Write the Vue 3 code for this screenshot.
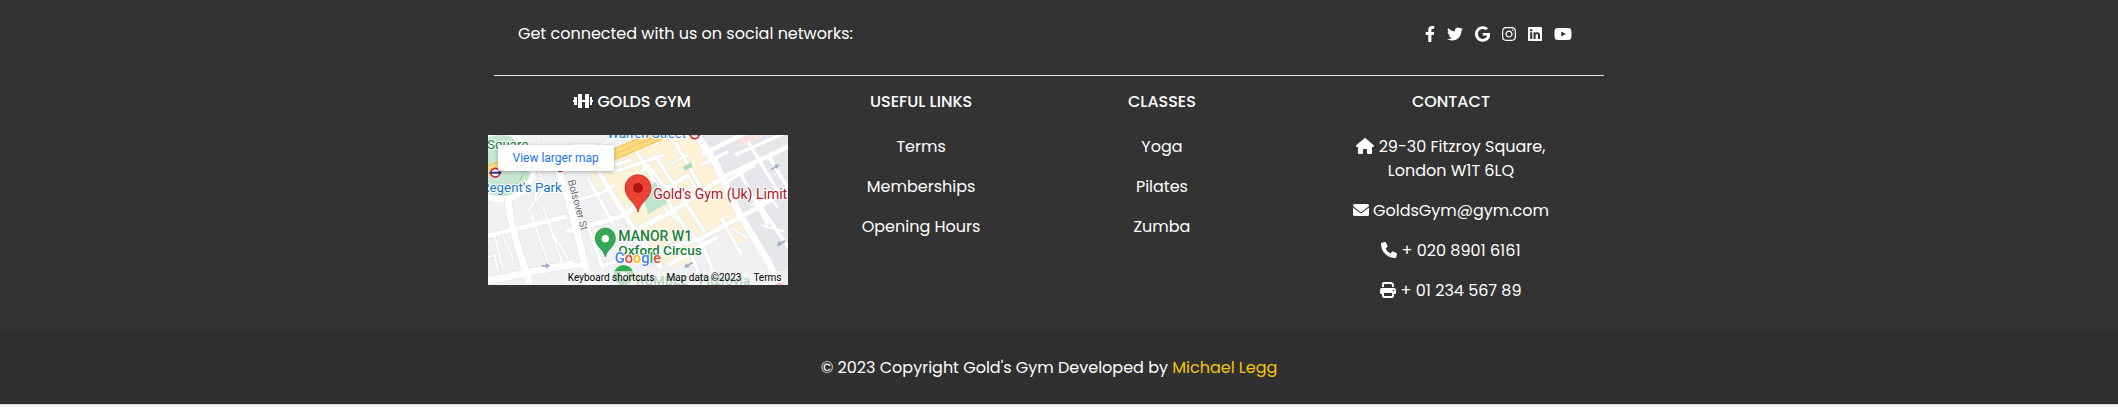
<script setup>
const socials = [
  { name: 'Facebook', w: 320, d: 'M279.14 288l14.22-92.66h-88.91v-60.13c0-25.35 12.42-50.06 52.24-50.06h40.42V6.26S260.43 0 225.36 0c-73.22 0-121.08 44.38-121.08 124.72v70.62H22.89V288h81.39v224h100.17V288z' },
  { name: 'Twitter', w: 512, d: 'M459.37 151.716c.325 4.548.325 9.097.325 13.645 0 138.72-105.583 298.558-298.558 298.558-59.452 0-114.68-17.219-161.137-47.106 8.447.974 16.568 1.299 25.34 1.299 49.055 0 94.213-16.568 130.274-44.832-46.132-.975-84.792-31.188-98.112-72.772 6.498.974 12.995 1.624 19.818 1.624 9.421 0 18.843-1.3 27.614-3.573-48.081-9.747-84.143-51.98-84.143-102.985v-1.299c13.969 7.797 30.214 12.67 47.431 13.319-28.264-18.843-46.781-51.005-46.781-87.391 0-19.492 5.197-37.36 14.294-52.954 51.655 63.675 129.3 105.258 216.365 109.807-1.624-7.797-2.599-15.918-2.599-24.04 0-57.828 46.782-104.934 104.934-104.934 30.213 0 57.502 12.67 76.67 33.137 23.715-4.548 46.456-13.32 66.599-25.34-7.798 24.366-24.366 44.833-46.132 57.827 21.117-2.273 41.584-8.122 60.426-16.243-14.292 20.791-32.161 39.308-52.628 54.253z' },
  { name: 'Google', w: 488, d: 'M488 261.8C488 403.3 391.1 504 248 504 110.8 504 0 393.2 0 256S110.8 8 248 8c66.8 0 123 24.5 166.3 64.9l-67.5 64.9C258.5 52.6 94.3 116.6 94.3 256c0 86.5 69.1 156.6 153.7 156.6 98.2 0 135-70.4 140.8-106.9H248v-85.3h236.1c2.3 12.7 3.9 24.9 3.9 41.4z' },
  { name: 'Instagram', w: 448, d: 'M224.1 141c-63.6 0-114.9 51.3-114.9 114.9s51.3 114.9 114.9 114.9S339 319.5 339 255.9 287.7 141 224.1 141zm0 189.6c-41.1 0-74.7-33.5-74.7-74.7s33.5-74.7 74.7-74.7 74.7 33.5 74.7 74.7-33.6 74.7-74.7 74.7zm146.4-194.3c0 14.9-12 26.8-26.8 26.8-14.9 0-26.8-12-26.8-26.8s12-26.8 26.8-26.8 26.8 12 26.8 26.8zm76.1 27.2c-1.7-35.9-9.9-67.7-36.2-93.9-26.2-26.2-58-34.4-93.9-36.2-37-2.1-147.9-2.1-184.9 0-35.8 1.7-67.6 9.9-93.9 36.1s-34.4 58-36.2 93.9c-2.1 37-2.1 147.9 0 184.9 1.7 35.9 9.9 67.7 36.2 93.9s58 34.4 93.9 36.2c37 2.1 147.9 2.1 184.9 0 35.9-1.7 67.7-9.9 93.9-36.2 26.2-26.2 34.4-58 36.2-93.9 2.1-37 2.1-147.8 0-184.8zM398.8 388c-7.8 19.6-22.9 34.7-42.6 42.6-29.5 11.7-99.5 9-132.1 9s-102.7 2.6-132.1-9c-19.6-7.8-34.7-22.9-42.6-42.6-11.7-29.5-9-99.5-9-132.1s-2.6-102.7 9-132.1c7.8-19.6 22.9-34.7 42.6-42.6 29.5-11.7 99.5-9 132.1-9s102.7-2.6 132.1 9c19.6 7.8 34.7 22.9 42.6 42.6 11.7 29.5 9 99.5 9 132.1s2.7 102.7-9 132.1z' },
  { name: 'LinkedIn', w: 448, d: 'M416 32H31.9C14.3 32 0 46.5 0 64.3v383.4C0 465.5 14.3 480 31.9 480H416c17.6 0 32-14.5 32-32.3V64.3c0-17.8-14.4-32.3-32-32.3zM135.4 416H69V202.2h66.5V416zm-33.2-243c-21.3 0-38.5-17.3-38.5-38.5S80.9 96 102.2 96c21.2 0 38.5 17.3 38.5 38.5 0 21.3-17.2 38.5-38.5 38.5zm282.1 243h-66.4V312c0-24.8-.5-56.7-34.5-56.7-34.6 0-39.9 27-39.9 54.9V416h-66.4V202.2h63.7v29.2h.9c8.9-16.8 30.6-34.5 62.9-34.5 67.2 0 79.7 44.3 79.7 101.9V416z' },
  { name: 'YouTube', w: 576, d: 'M549.655 124.083c-6.281-23.65-24.787-42.276-48.284-48.597C458.781 64 288 64 288 64S117.22 64 74.629 75.486c-23.497 6.322-42.003 24.947-48.284 48.597-11.412 42.867-11.412 132.305-11.412 132.305s0 89.438 11.412 132.305c6.281 23.65 24.787 41.5 48.284 47.821C117.22 448 288 448 288 448s170.78 0 213.371-11.486c23.497-6.321 42.003-24.171 48.284-47.821 11.412-42.867 11.412-132.305 11.412-132.305s0-89.438-11.412-132.305zm-317.51 213.508V175.185l142.739 81.205-142.739 81.201z' },
]

const linkGroups = [
  { title: 'USEFUL LINKS', items: ['Terms', 'Memberships', 'Opening Hours'] },
  { title: 'CLASSES', items: ['Yoga', 'Pilates', 'Zumba'] },
]

const contacts = [
  { w: 576, lines: ['29-30 Fitzroy Square,', 'London W1T 6LQ'], d: 'M575.8 255.5c0 18-15 32.1-32 32.1h-32l.7 160.2c0 2.7-.2 5.4-.5 8.1V472c0 22.1-17.9 40-40 40H392c-22.1 0-40-17.9-40-40V384c0-17.7-14.3-32-32-32H256c-17.7 0-32 14.3-32 32v88c0 22.1-17.9 40-40 40H104c-22.1 0-40-17.9-40-40V287.6H32c-18 0-32-14-32-32.1c0-9 3-17 10-24L266.4 8c7-7 15-8 22-8s15 2 21 7L564.8 231.5c8 7 12 15 11 24z' },
  { w: 512, lines: ['GoldsGym@gym.com'], d: 'M256 352c-16.53 0-33.06-5.422-47.16-16.41L0 173.2V400C0 426.5 21.49 448 48 448h416c26.51 0 48-21.49 48-48V173.2l-208.8 162.5C289.1 346.6 272.5 352 256 352zM16.29 145.3l212.2 165.1c16.19 12.6 38.87 12.6 55.06 0l212.2-165.1C505.1 137.3 512 125 512 112C512 85.49 490.5 64 464 64h-416C21.49 64 0 85.49 0 112C0 125 6.01 137.3 16.29 145.3z' },
  { w: 512, lines: ['+ 020 8901 6161'], d: 'M511.2 387l-23.25 100.8c-3.266 14.25-15.79 24.22-30.46 24.22C205.2 512 0 306.8 0 54.5c0-14.66 9.969-27.2 24.22-30.45l100.8-23.25C139.7-2.602 154.7 5.018 160.8 18.92l46.52 108.5c5.438 12.78 1.77 27.67-8.98 36.45L144.5 207.1c33.98 69.22 90.26 125.5 159.5 159.5l44.08-53.8c8.688-10.78 23.69-14.51 36.47-8.975l108.5 46.51C506.1 357.2 514.6 372.4 511.2 387z' },
  { w: 512, lines: ['+ 01 234 567 89'], d: 'M128 0C92.7 0 64 28.7 64 64v96h64V64H354.7L384 93.3V160h64V93.3c0-17-6.7-33.3-18.7-45.3L400 18.7C388 6.7 371.7 0 354.7 0H128zM384 352v96H128V352H384zm64 32h32c17.7 0 32-14.3 32-32V256c0-35.3-28.7-64-64-64H64c-35.3 0-64 28.7-64 64v96c0 17.7 14.3 32 32 32H64v64c0 35.3 28.7 64 64 64H384c35.3 0 64-28.7 64-64V384zM432 248a24 24 0 1 1 0 48 24 24 0 1 1 0-48z' },
]

/* Streets of the map, as polylines grouped by stroke width */
const roads = [
  { width: 22, d: 'M60 190 C66 280 100 360 128 460 M205 90 L240 190 L310 460 M620 -10 L680 80 L750 230 L840 380 L880 460 M-10 440 L120 412 L260 385' },
  { width: 15, d: 'M120 412 L290 388 M440 290 L560 225 L700 130 L910 30 M510 350 L640 310 L760 245 L910 160 M540 390 L690 305 M-10 305 L70 285 L235 245 M235 290 L400 245 L600 120 M320 90 L410 240 L520 400 M640 60 L780 -10' },
  { width: 11, d: 'M250 200 L340 175 L380 150 M300 130 L375 265 M250 290 L300 275 L345 400 M380 110 L530 60 M440 40 L500 140 L600 290 M500 60 L590 200 L650 290 M560 20 L640 160 M340 100 L430 75 M460 110 L480 90 L540 170 M640 90 L720 50 M700 150 L800 90 M780 20 L870 170 M740 60 L900 -10 M800 190 L910 350 M760 120 L840 270 M700 250 L760 360 M640 320 L680 420 M600 340 L640 430 M400 350 L440 440 M410 300 L520 240 M350 390 L480 350 M410 240 L440 210 M840 60 L900 160' },
  { width: 7, d: 'M130 240 L180 380 M165 215 L225 390 M190 290 L240 370 M20 305 L45 400 M-10 370 L20 360 L30 410 M45 305 L75 370 M120 225 L175 160 L205 140 M150 145 L140 200 M150 20 L200 90 M120 40 L170 150 M70 0 L180 110 M250 30 L330 30 M280 60 L380 10 M580 180 L620 155 L600 120 M535 300 L570 360 M600 280 L640 330 M380 180 L430 260 M790 210 L850 190 L870 220 M820 270 L890 290 M730 280 L780 310 M540 90 L600 60 M510 200 L570 260' },
]
</script>

<template>
  <footer class="footer">
    <div class="container">
      <section class="social">
        <span>Get connected with us on social networks:</span>
        <nav class="social-links" aria-label="Social networks">
          <a v-for="s in socials" :key="s.name" href="#" :aria-label="s.name">
            <svg class="icon" :viewBox="`0 0 ${s.w} 512`"><path :d="s.d" /></svg>
          </a>
        </nav>
      </section>
    </div>

    <div class="columns">
      <section class="column">
        <h6>
          <svg class="icon" viewBox="0 0 20 16">
            <path d="M0 7h1V4h3v8H1V9H0zM5 1h4v6h3V1h4v14h-4V9H9v6H5zM17 4h2v3h1v2h-1v3h-2z" />
          </svg>
          GOLDS GYM
        </h6>
        <div class="map">
          <svg class="map-canvas" viewBox="0 0 900 450" role="img" aria-label="Map of Gold's Gym">
            <rect width="900" height="450" fill="#eff1f3" />
            <path d="M620 0H900V450H880L680 110z" fill="#e5e7eb" />
            <path d="M300 110L430 50L520 0H620L690 110L800 310L740 330L690 270L560 400L520 385L470 300L400 240z" fill="#fef3d6" />
            <path d="M500 340L560 300L625 370L560 400z" fill="#fef3d6" />
            <path d="M735 0H830L770 35z" fill="#fbe3e1" />
            <circle cx="38" cy="95" r="106" fill="#fff" />
            <circle cx="38" cy="92" r="92" fill="#c6e7d0" />
            <circle cx="38" cy="92" r="72" fill="none" stroke="#87c994" stroke-width="3" stroke-dasharray="20 8" />
            <g v-for="r in roads" :key="r.width" fill="none" stroke-linejoin="round">
              <path :d="r.d" stroke="#dcdfe5" :stroke-width="r.width + 3" />
            </g>
            <g v-for="r in roads" :key="r.width" fill="none" stroke-linejoin="round">
              <path :d="r.d" stroke="#fff" :stroke-width="r.width" />
            </g>
            <path d="M0 108L60 85M370 62L570 -25" fill="none" stroke="#f9c05a" stroke-width="34" />
            <path d="M0 108L60 85M370 62L570 -25" fill="none" stroke="#fddb83" stroke-width="27" />
            <path d="M375 60L560 -20" fill="none" stroke="#f9c05a" stroke-width="3" />
            <path d="M462 170L502 140L540 205L480 238z" fill="#c1e5cc" />
            <path d="M585 96L608 82L614 94L592 108z" fill="#a4dbb8" />
            <g fill="#9da9c4">
              <path d="M160 391h14v-7l12 8-12 9v-6h-14z" />
              <path d="M612 380l-14 9-4-5-5 14 15-1-3-4 14-8z" />
              <path d="M890 315l-14 8-4-5-5 14 15-1-3-4 14-7z" />
              <path d="M848 102l14-8-4-5 15-1-6 14-3-4-14 8z" />
            </g>
            <g class="place">
              <text x="-3" y="43" fill="#188038" font-size="40">Square</text>
              <text x="-20" y="171" fill="#1a73c8" font-size="40">Regent's Park</text>
              <text x="358" y="8" fill="#1a73e8" font-size="39">Warren Street</text>
              <text transform="translate(239 137) rotate(75)" fill="#66696d" font-size="31">Bolsover St</text>
            </g>
            <g fill="#fff" stroke="#d9192b" stroke-width="5">
              <circle cx="22" cy="113" r="13" />
              <circle cx="620" cy="-2" r="13" />
              <circle cx="217" cy="98" r="11" />
            </g>
            <path d="M4 113H40M602 -2H638" stroke="#29348e" stroke-width="6" />

            <path d="M450 232C444 201 411 192 411 158A39 39 0 0 1 489 158C489 192 456 201 450 232z" fill="#ea4335" stroke="#c5221f" stroke-width="2" />
            <circle cx="450" cy="159" r="15" fill="#b31412" />
            <path d="M352 366C347 341 322 336 322 309A30 30 0 0 1 382 309C382 336 357 341 352 366z" fill="#34a853" stroke="#188038" stroke-width="2" />
            <circle cx="352" cy="311" r="11" fill="#fff" />
            <path d="M406 470C400 446 377 442 377 420A30 30 0 0 1 437 420C437 442 412 446 406 470z" fill="#34a853" />
            <circle cx="407" cy="422" r="11" fill="#fff" />
            <g class="place">
              <text x="496" y="193" fill="#b3141b" font-size="42">Gold's Gym (Uk) Limit</text>
            </g>
            <g class="place place-strong">
              <text x="391" y="317" fill="#188038" font-size="42">MANOR W1</text>
              <text x="391" y="360" fill="#188038" font-size="41">Oxford Circus</text>
              <text x="444" y="450" fill="#188038" font-size="40">RUMBLE - Fitzrovia</text>
            </g>
            <path d="M865 450A15 15 0 0 1 885 450" fill="none" stroke="#ea4335" stroke-width="6" />
            <text class="brand" x="380" y="384" font-size="44"><tspan fill="#4285f4">G</tspan><tspan fill="#ea4335">o</tspan><tspan fill="#fbbc05">o</tspan><tspan fill="#4285f4">g</tspan><tspan fill="#34a853">l</tspan><tspan fill="#ea4335">e</tspan></text>
          </svg>
          <a class="map-larger" href="#">View larger map</a>
          <div class="map-legal">
            <button type="button">Keyboard shortcuts</button>
            <span>Map data ©2023</span>
            <a href="#">Terms</a>
          </div>
        </div>
      </section>

      <section v-for="g in linkGroups" :key="g.title" class="column">
        <h6>{{ g.title }}</h6>
        <p v-for="item in g.items" :key="item"><a href="#">{{ item }}</a></p>
      </section>

      <section class="column">
        <h6>CONTACT</h6>
        <p v-for="c in contacts" :key="c.lines[0]">
          <svg class="icon" :viewBox="`0 0 ${c.w} 512`"><path :d="c.d" /></svg>
          <template v-for="(line, i) in c.lines" :key="line"><br v-if="i" />{{ ' ' + line }}</template>
        </p>
      </section>
    </div>

    <div class="copyright">
      © 2023 Copyright Gold's Gym Developed by <a href="#">Michael Legg</a>
    </div>
  </footer>
</template>

<style>
body {
  margin: 0;
  background: #f4f2f4;
}
</style>

<style scoped>
.footer {
  background: #333;
  color: #fff;
  font-family: Poppins, Inter, "Open Sans", sans-serif;
  font-size: 16px;
  line-height: 24px;
  border-bottom: 1px solid #d8d6d8;
}

.footer a {
  color: inherit;
  text-decoration: none;
}

.container {
  padding-right: 20px;
}

.social {
  box-sizing: border-box;
  max-width: 1110px;
  margin: 0 auto;
  padding: 22px 32px 29px 24px;
  display: flex;
  justify-content: space-between;
  align-items: center;
  border-bottom: 1px solid #dfe6e2;
}

.social-links {
  display: flex;
  gap: 12px;
}

.social-links a {
  display: flex;
}

.icon {
  height: 16px;
  width: auto;
  fill: currentColor;
  vertical-align: -2px;
}

.columns {
  max-width: 1156px;
  margin: 0 auto;
  padding: 16px 35px 13px 0;
  display: grid;
  grid-template-columns: 7fr 5fr 5fr 7fr;
  text-align: center;
}

h6 {
  margin: 0 0 24px;
  font-size: 16px;
  line-height: 19px;
  font-weight: 500;
}

p {
  margin: 0 0 16px;
}

.map {
  position: relative;
  width: 300px;
  height: 150px;
  margin-left: 24px;
  overflow: hidden;
  font-family: Roboto, sans-serif;
  color: #000;
}

.map-canvas {
  display: block;
  width: 100%;
  height: 100%;
}

.place text {
  font-family: Roboto, sans-serif;
  stroke: #fff;
  stroke-width: 6px;
  stroke-linejoin: round;
  paint-order: stroke;
}

.place-strong text {
  font-weight: 500;
}

.brand {
  font-family: Roboto, sans-serif;
  font-weight: 500;
  stroke: #fff;
  stroke-width: 5px;
  paint-order: stroke;
}

.map .map-larger {
  position: absolute;
  top: 10px;
  left: 10px;
  padding: 0 15px;
  background: #fff;
  border-radius: 2px;
  box-shadow: 0 1px 4px rgba(0, 0, 0, 0.3);
  color: #1a73e8;
  font-size: 12px;
  line-height: 26px;
}

.map-legal {
  position: absolute;
  right: 0;
  bottom: 0;
  display: flex;
  gap: 12px;
  padding: 0 6px 0 4px;
  background: rgba(245, 245, 245, 0.7);
  font-size: 10px;
  line-height: 14px;
}

.map-legal button {
  padding: 0;
  border: 0;
  background: none;
  color: inherit;
  font: inherit;
}

.copyright {
  padding: 24px 20px 24px 0;
  background: rgba(0, 0, 0, 0.05);
  text-align: center;
}

.footer .copyright a {
  color: #f0c808;
}
</style>
